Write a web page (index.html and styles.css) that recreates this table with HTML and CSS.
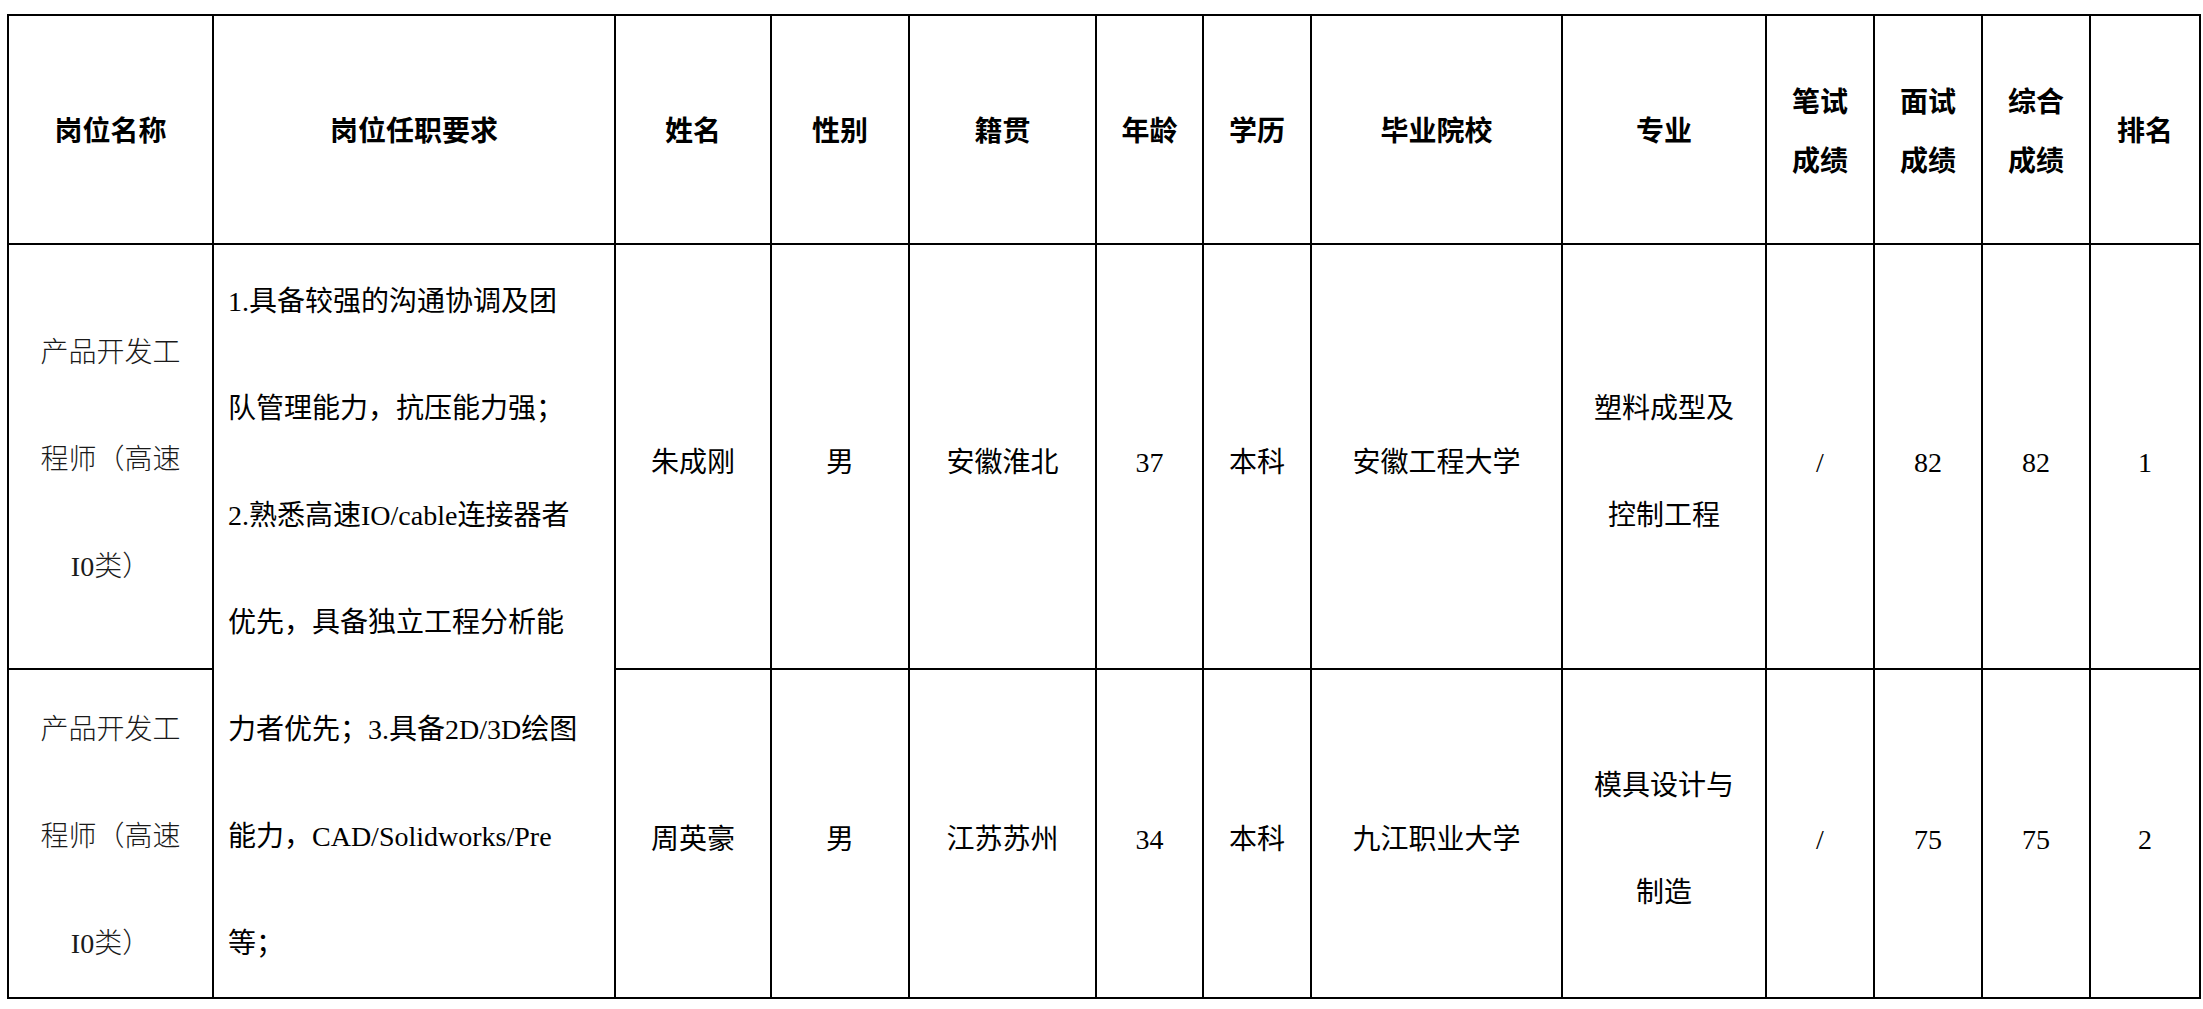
FILE: index.html
```html
<!DOCTYPE html>
<html lang="zh-CN">
<head>
<meta charset="utf-8">
<title>招聘成绩表</title>
<link rel="stylesheet" href="styles.css">
</head>
<body>
<table class="sheet">
  <colgroup>
    <col class="c-post">
    <col class="c-req">
    <col class="c-name">
    <col class="c-sex">
    <col class="c-home">
    <col class="c-age">
    <col class="c-edu">
    <col class="c-school">
    <col class="c-major">
    <col class="c-score">
    <col class="c-score">
    <col class="c-score">
    <col class="c-rank">
  </colgroup>
  <thead>
    <tr class="head-row">
      <th>岗位名称</th>
      <th>岗位任职要求</th>
      <th>姓名</th>
      <th>性别</th>
      <th>籍贯</th>
      <th>年龄</th>
      <th>学历</th>
      <th>毕业院校</th>
      <th>专业</th>
      <th class="two">笔试<br>成绩</th>
      <th class="two">面试<br>成绩</th>
      <th class="two">综合<br>成绩</th>
      <th>排名</th>
    </tr>
  </thead>
  <tbody>
    <tr class="row-a">
      <td class="post">产品开发工<br>程师（高速<br>I0类）</td>
      <td class="req" rowspan="2">1.具备较强的沟通协调及团<br>队管理能力，抗压能力强；<br>2.熟悉高速IO/cable连接器者<br>优先，具备独立工程分析能<br>力者优先；3.具备2D/3D绘图<br>能力，CAD/Solidworks/Pre<br>等；</td>
      <td>朱成刚</td>
      <td>男</td>
      <td>安徽淮北</td>
      <td class="num">37</td>
      <td>本科</td>
      <td>安徽工程大学</td>
      <td class="multi">塑料成型及<br>控制工程</td>
      <td class="num">/</td>
      <td class="num">82</td>
      <td class="num">82</td>
      <td class="num">1</td>
    </tr>
    <tr class="row-b">
      <td class="post">产品开发工<br>程师（高速<br>I0类）</td>
      <td>周英豪</td>
      <td>男</td>
      <td>江苏苏州</td>
      <td class="num">34</td>
      <td>本科</td>
      <td>九江职业大学</td>
      <td class="multi">模具设计与<br>制造</td>
      <td class="num">/</td>
      <td class="num">75</td>
      <td class="num">75</td>
      <td class="num">2</td>
    </tr>
  </tbody>
</table>
</body>
</html>
```

FILE: styles.css
```css
html, body {
  margin: 0;
  padding: 0;
  background: #ffffff;
}

body {
  padding: 14px 0 0 7px;
  font-family: "Liberation Serif", "Noto Sans CJK SC", sans-serif;
  color: #000000;
}

.sheet {
  border-collapse: collapse;
  table-layout: fixed;
  width: 2193px;
}

.sheet th,
.sheet td {
  border: 2px solid #000000;
  padding: 0;
  text-align: center;
  vertical-align: middle;
  font-size: 28px;
  white-space: nowrap;
}

.c-post { width: 205px; }
.c-req { width: 402px; }
.c-name { width: 156px; }
.c-sex { width: 138px; }
.c-home { width: 187px; }
.c-age { width: 107px; }
.c-edu { width: 108px; }
.c-school { width: 251px; }
.c-major { width: 204px; }
.c-score { width: 108px; }
.c-rank { width: 110px; }

.head-row th {
  height: 227px;
  font-family: "Noto Sans CJK SC", sans-serif;
  font-weight: 700;
  line-height: 59px;
}

.row-a td,
.row-b td {
  line-height: 107px;
  padding-top: 11px;
}

.row-a td {
  height: 412px;
}

.row-b td {
  height: 316px;
}

.sheet td.post {
  font-family: "Liberation Serif", "Noto Sans CJK SC", serif;
  font-weight: 300;
  color: #1a1a1a;
  padding-top: 5px;
}

.sheet td.req {
  text-align: left;
  padding: 2px 0 0 14px;
  line-height: 107px;
}

.num {
  font-family: "Liberation Serif", serif;
}
```
